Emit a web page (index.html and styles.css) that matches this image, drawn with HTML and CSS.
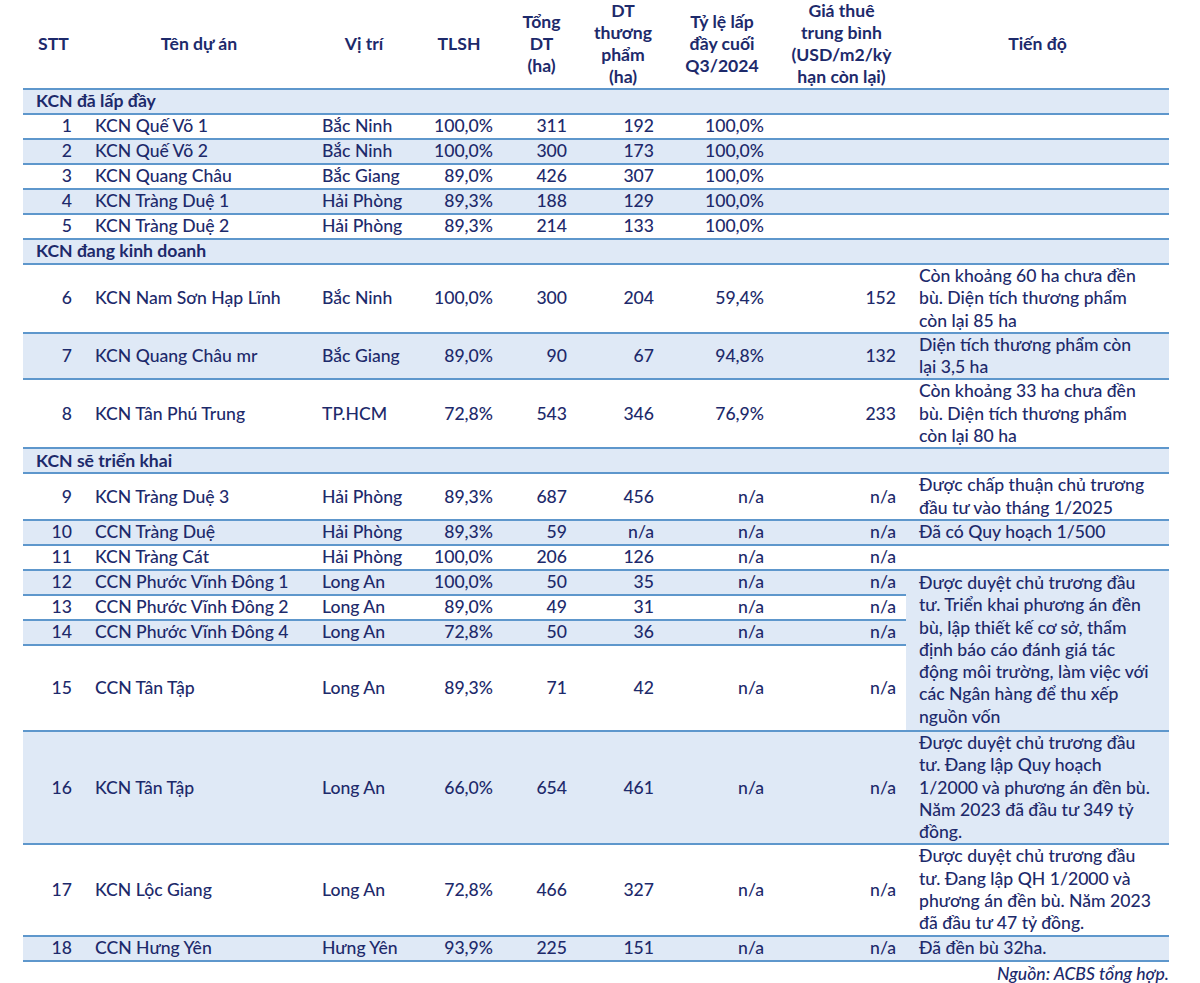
FILE: index.html
```html
<!DOCTYPE html>
<html lang="vi">
<head>
<meta charset="utf-8">
<title>KCN</title>
<link rel="stylesheet" href="styles.css">
</head>
<body>
<div class="page">
<table class="kcn">
  <colgroup>
    <col class="c-stt"><col class="c-name"><col class="c-loc"><col class="c-tlsh"><col class="c-tong"><col class="c-tp"><col class="c-tyle"><col class="c-gia"><col class="c-td">
  </colgroup>
  <thead>
    <tr class="head">
      <th>STT</th>
      <th>Tên dự án</th>
      <th>Vị trí</th>
      <th>TLSH</th>
      <th>Tổng<br>DT<br>(ha)</th>
      <th>DT<br>thương<br>phẩm<br>(ha)</th>
      <th>Tỷ lệ lấp<br>đầy cuối<br>Q3/2024</th>
      <th>Giá thuê<br>trung bình<br>(USD/m2/kỳ<br>hạn còn lại)</th>
      <th>Tiến độ</th>
    </tr>
  </thead>
  <tbody>
    <tr class="sec"><td colspan="9">KCN đã lấp đầy</td></tr>
    <tr><td class="n">1</td><td class="t">KCN Quế Võ 1</td><td class="l">Bắc Ninh</td><td class="r1">100,0%</td><td class="r2">311</td><td class="r3">192</td><td class="r4">100,0%</td><td class="r5"></td><td class="p"></td></tr>
    <tr class="alt"><td class="n">2</td><td class="t">KCN Quế Võ 2</td><td class="l">Bắc Ninh</td><td class="r1">100,0%</td><td class="r2">300</td><td class="r3">173</td><td class="r4">100,0%</td><td class="r5"></td><td class="p"></td></tr>
    <tr><td class="n">3</td><td class="t">KCN Quang Châu</td><td class="l">Bắc Giang</td><td class="r1">89,0%</td><td class="r2">426</td><td class="r3">307</td><td class="r4">100,0%</td><td class="r5"></td><td class="p"></td></tr>
    <tr class="alt"><td class="n">4</td><td class="t">KCN Tràng Duệ 1</td><td class="l">Hải Phòng</td><td class="r1">89,3%</td><td class="r2">188</td><td class="r3">129</td><td class="r4">100,0%</td><td class="r5"></td><td class="p"></td></tr>
    <tr><td class="n">5</td><td class="t">KCN Tràng Duệ 2</td><td class="l">Hải Phòng</td><td class="r1">89,3%</td><td class="r2">214</td><td class="r3">133</td><td class="r4">100,0%</td><td class="r5"></td><td class="p"></td></tr>

    <tr class="sec"><td colspan="9">KCN đang kinh doanh</td></tr>
    <tr><td class="n">6</td><td class="t">KCN Nam Sơn Hạp Lĩnh</td><td class="l">Bắc Ninh</td><td class="r1">100,0%</td><td class="r2">300</td><td class="r3">204</td><td class="r4">59,4%</td><td class="r5">152</td><td class="p">Còn khoảng 60 ha chưa đền<br>bù. Diện tích thương phẩm<br>còn lại 85 ha</td></tr>
    <tr class="alt"><td class="n">7</td><td class="t">KCN Quang Châu mr</td><td class="l">Bắc Giang</td><td class="r1">89,0%</td><td class="r2">90</td><td class="r3">67</td><td class="r4">94,8%</td><td class="r5">132</td><td class="p">Diện tích thương phẩm còn<br>lại 3,5 ha</td></tr>
    <tr><td class="n">8</td><td class="t">KCN Tân Phú Trung</td><td class="l">TP.HCM</td><td class="r1">72,8%</td><td class="r2">543</td><td class="r3">346</td><td class="r4">76,9%</td><td class="r5">233</td><td class="p">Còn khoảng 33 ha chưa đền<br>bù. Diện tích thương phẩm<br>còn lại 80 ha</td></tr>

    <tr class="sec"><td colspan="9">KCN sẽ triển khai</td></tr>
    <tr><td class="n">9</td><td class="t">KCN Tràng Duệ 3</td><td class="l">Hải Phòng</td><td class="r1">89,3%</td><td class="r2">687</td><td class="r3">456</td><td class="r4">n/a</td><td class="r5">n/a</td><td class="p">Được chấp thuận chủ trương<br>đầu tư vào tháng 1/2025</td></tr>
    <tr class="alt"><td class="n">10</td><td class="t">CCN Tràng Duệ</td><td class="l">Hải Phòng</td><td class="r1">89,3%</td><td class="r2">59</td><td class="r3">n/a</td><td class="r4">n/a</td><td class="r5">n/a</td><td class="p">Đã có Quy hoạch 1/500</td></tr>
    <tr><td class="n">11</td><td class="t">KCN Tràng Cát</td><td class="l">Hải Phòng</td><td class="r1">100,0%</td><td class="r2">206</td><td class="r3">126</td><td class="r4">n/a</td><td class="r5">n/a</td><td class="p"></td></tr>
    <tr class="alt"><td class="n">12</td><td class="t">CCN Phước Vĩnh Đông 1</td><td class="l">Long An</td><td class="r1">100,0%</td><td class="r2">50</td><td class="r3">35</td><td class="r4">n/a</td><td class="r5">n/a</td><td class="p merged" rowspan="4">Được duyệt chủ trương đầu<br>tư. Triển khai phương án đền<br>bù, lập thiết kế cơ sở, thẩm<br>định báo cáo đánh giá tác<br>động môi trường, làm việc với<br>các Ngân hàng để thu xếp<br>nguồn vốn</td></tr>
    <tr><td class="n">13</td><td class="t">CCN Phước Vĩnh Đông 2</td><td class="l">Long An</td><td class="r1">89,0%</td><td class="r2">49</td><td class="r3">31</td><td class="r4">n/a</td><td class="r5">n/a</td></tr>
    <tr class="alt"><td class="n">14</td><td class="t">CCN Phước Vĩnh Đông 4</td><td class="l">Long An</td><td class="r1">72,8%</td><td class="r2">50</td><td class="r3">36</td><td class="r4">n/a</td><td class="r5">n/a</td></tr>
    <tr class="tall"><td class="n">15</td><td class="t">CCN Tân Tập</td><td class="l">Long An</td><td class="r1">89,3%</td><td class="r2">71</td><td class="r3">42</td><td class="r4">n/a</td><td class="r5">n/a</td></tr>
    <tr class="alt"><td class="n">16</td><td class="t">KCN Tân Tập</td><td class="l">Long An</td><td class="r1">66,0%</td><td class="r2">654</td><td class="r3">461</td><td class="r4">n/a</td><td class="r5">n/a</td><td class="p">Được duyệt chủ trương đầu<br>tư. Đang lập Quy hoạch<br>1/2000 và phương án đền bù.<br>Năm 2023 đã đầu tư 349 tỷ<br>đồng.</td></tr>
    <tr><td class="n">17</td><td class="t">KCN Lộc Giang</td><td class="l">Long An</td><td class="r1">72,8%</td><td class="r2">466</td><td class="r3">327</td><td class="r4">n/a</td><td class="r5">n/a</td><td class="p">Được duyệt chủ trương đầu<br>tư. Đang lập QH 1/2000 và<br>phương án đền bù. Năm 2023<br>đã đầu tư 47 tỷ đồng.</td></tr>
    <tr class="alt"><td class="n">18</td><td class="t">CCN Hưng Yên</td><td class="l">Hưng Yên</td><td class="r1">93,9%</td><td class="r2">225</td><td class="r3">151</td><td class="r4">n/a</td><td class="r5">n/a</td><td class="p">Đã đền bù 32ha.</td></tr>
  </tbody>
</table>
<p class="source">Nguồn: ACBS tổng hợp.</p>
</div>
</body>
</html>
```
FILE: styles.css
```css
html, body {
  margin: 0;
  padding: 0;
  background: #ffffff;
}
body {
  font-family: Lato, "Noto Sans", sans-serif;
  color: #1d2a6b;
  font-size: 17.6px;
  font-weight: 500;
}
.page {
  width: 1200px;
  padding: 0 0 0 23px;
  box-sizing: border-box;
}
.kcn {
  border-collapse: collapse;
  table-layout: fixed;
  width: 1146px;
}
.c-stt { width: 61px; }
.c-name { width: 230px; }
.c-loc { width: 100px; }
.c-tlsh { width: 90px; }
.c-tong { width: 75px; }
.c-tp { width: 88px; }
.c-tyle { width: 110px; }
.c-gia { width: 129px; }
.c-td { width: 263px; }

.head th {
  font-weight: 700;
  line-height: 22px;
  height: 87px;
  padding: 0;
  text-align: center;
  vertical-align: middle;
  white-space: nowrap;
}
.kcn td {
  padding: 0;
  line-height: 22.3px;
  height: 23px;
  vertical-align: middle;
  white-space: nowrap;
  border-bottom: 2px solid #5e97cc;
}
.kcn tbody tr:first-child td {
  border-top: 2px solid #5e97cc;
}
.sec td {
  background: #dfe9f6;
  font-weight: 700;
  padding-left: 13px;
}
.alt td, .merged {
  background: #dfe9f6;
}
.kcn td.merged {
  vertical-align: top;
  padding-top: 1px;
}
.tall td { height: 84px; }
.n { text-align: right; padding-right: 12px !important; }
.t { padding-left: 11px !important; }
.l { padding-left: 8px !important; }
.r1 { text-align: right; padding-right: 11px !important; }
.r2 { text-align: right; padding-right: 12px !important; }
.r3 { text-align: right; padding-right: 13px !important; }
.r4 { text-align: right; padding-right: 13px !important; }
.r5 { text-align: right; padding-right: 10px !important; }
.p { padding-left: 13px !important; }
.source {
  margin: 0;
  padding: 1px 31px 0 0;
  text-align: right;
  font-style: italic;
  line-height: 21px;
}
```
